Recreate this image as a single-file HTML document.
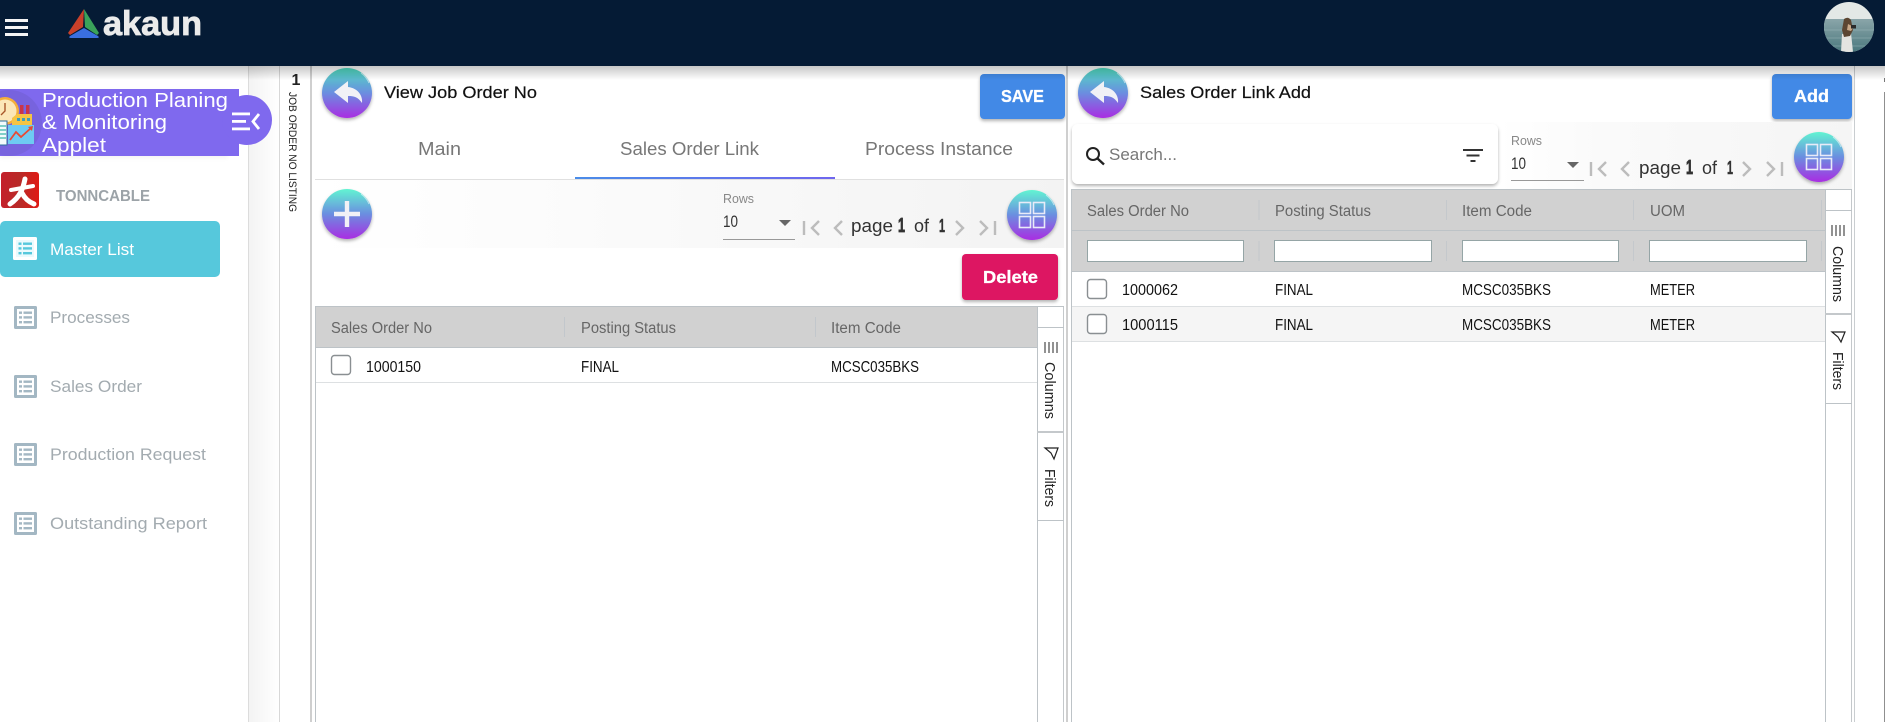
<!DOCTYPE html>
<html lang="en">
<head>
<meta charset="utf-8">
<title>Akaun</title>
<style>
html,body{margin:0;padding:0;background:#fff;width:1885px;height:722px;overflow:hidden}
svg{display:block}
text{font-family:"Liberation Sans",sans-serif}
.nav{font-size:17px;fill:#a3abb0}
.th{font-size:15.5px;fill:#666}
.td{font-size:16px;fill:#111}
.tab{font-size:18px;fill:#777}
.title{font-size:17px;fill:#111;stroke:#111;stroke-width:.2}
.btn{font-size:17.5px;font-weight:bold;fill:#fff;stroke:#fff;stroke-width:.3}
.rows{font-size:13px;fill:#888}
.num{font-size:17px;fill:#333}
.pg{font-size:18px;fill:#333}
.pgb{font-size:20px;font-weight:bold;fill:#333;stroke:#333;stroke-width:.8}
.pgc{font-size:18px;font-weight:bold;fill:#333;stroke:#333;stroke-width:.5}
.side{font-size:14.500px;fill:#222}
.ic{fill:none;stroke:#bcbcbc;stroke-width:2.4}
.cb{fill:#fff;stroke:#8a8f92;stroke-width:1.4}
.inp{fill:#fff;stroke:#95a5a6;stroke-width:1}
</style>
</head>
<body>
<svg xmlns="http://www.w3.org/2000/svg" width="1885" height="722" viewBox="0 0 1885 722">
<defs>
<linearGradient id="g1" x1="0" y1="0" x2="0" y2="1"><stop offset="0" stop-color="#4fdcc0"/><stop offset=".5" stop-color="#6b8ee0"/><stop offset="1" stop-color="#a92de2"/></linearGradient>
<linearGradient id="g2" x1="0" y1="0" x2="0" y2="1"><stop offset="0" stop-color="#62f4d2"/><stop offset=".5" stop-color="#6b8ee0"/><stop offset="1" stop-color="#a92de2"/></linearGradient>
<linearGradient id="tb" x1="0" y1="0" x2="1" y2="0"><stop offset="0" stop-color="#fff"/><stop offset=".35" stop-color="#fbfbfb"/><stop offset="1" stop-color="#f3f3f3"/></linearGradient>
<linearGradient id="tb2" x1="0" y1="0" x2="1" y2="0"><stop offset="0" stop-color="#fff"/><stop offset=".3" stop-color="#fafafa"/><stop offset="1" stop-color="#f5f5f5"/></linearGradient>
<linearGradient id="ul" x1="0" y1="0" x2="1" y2="0"><stop offset="0" stop-color="#4a8ce8"/><stop offset="1" stop-color="#6f66ee"/></linearGradient>
<linearGradient id="sh" x1="0" y1="0" x2="0" y2="1"><stop offset="0" stop-color="#000" stop-opacity=".22"/><stop offset="1" stop-color="#000" stop-opacity="0"/></linearGradient>
<linearGradient id="sd" x1="0" y1="0" x2="1" y2="0"><stop offset="0" stop-color="#f3f3f3"/><stop offset="1" stop-color="#fff"/></linearGradient>
<linearGradient id="tile" x1="0" y1="0" x2="1" y2="0"><stop offset="0" stop-color="#c4202a"/><stop offset=".5" stop-color="#b82a28"/><stop offset="1" stop-color="#e01a14"/></linearGradient>
<linearGradient id="sea" x1="0" y1="0" x2="0" y2="1"><stop offset="0" stop-color="#8aa5a9"/><stop offset="1" stop-color="#4a787d"/></linearGradient>
<filter id="ds" x="-30%" y="-30%" width="160%" height="170%"><feDropShadow dx="0" dy="2" stdDeviation="1.5" flood-color="#000" flood-opacity=".3"/></filter>
<filter id="ds2" x="-5%" y="-15%" width="110%" height="140%"><feDropShadow dx="0" dy="2" stdDeviation="2.5" flood-color="#000" flood-opacity=".25"/></filter>
<clipPath id="av"><circle cx="1849" cy="27" r="25"/></clipPath>
<clipPath id="pc"><rect x="0" y="89" width="239" height="67"/></clipPath>
<g id="list">
<rect x="0" y="0" width="23" height="23" rx="1.5" fill="currentColor"/>
<rect x="3" y="3" width="17" height="17" fill="#fff"/>
<rect x="5" y="5.500" width="3" height="2.400" fill="currentColor"/><rect x="9.500" y="5.500" width="8.500" height="2.400" fill="currentColor"/>
<rect x="5" y="10.200" width="3" height="2.400" fill="currentColor"/><rect x="9.500" y="10.200" width="8.500" height="2.400" fill="currentColor"/>
<rect x="5" y="15" width="3" height="2.400" fill="currentColor"/><rect x="9.500" y="15" width="8.500" height="2.400" fill="currentColor"/>
</g>
<g id="back">
<path d="M-13 -1 L1 -12 V-6 C11 -5 16 3 15 10 C11 4 7 3 1 3 V10 Z" fill="#f1f1f6"/>
<path d="M14 -20 A24 24 0 0 1 22 -10" fill="none" stroke="#fff" stroke-opacity=".55" stroke-width="1"/>
</g>
<g id="grid">
<rect x="-12.500" y="-12.500" width="11" height="11" fill="none" stroke="#e8ebf8" stroke-width="1.600"/>
<rect x="1.500" y="-12.500" width="11" height="11" fill="none" stroke="#e8ebf8" stroke-width="1.600"/>
<rect x="-12.500" y="1.500" width="11" height="11" fill="none" stroke="#e8ebf8" stroke-width="1.600"/>
<rect x="1.500" y="1.500" width="11" height="11" fill="none" stroke="#e8ebf8" stroke-width="1.600"/>
<path d="M14 -20 A24 24 0 0 1 22 -10" fill="none" stroke="#fff" stroke-opacity=".55" stroke-width="1"/>
</g>
<g id="pager">
<path class="ic" d="M1 0V14M16 0L9 7L16 14"/>
<path class="ic" d="M39 0L32 7L39 14"/>
<path class="ic" d="M153 0L160 7L153 14"/>
<path class="ic" d="M177 0L184 7L177 14M192 0V14"/>
</g>
</defs>

<!-- sidebar -->
<rect x="249" y="66" width="30" height="656" fill="url(#sd)"/>
<rect x="248" y="66" width="1" height="656" fill="#dcdcdc"/>
<rect x="279" y="66" width="1" height="656" fill="#d8d8d8"/>
<rect x="310" y="66" width="2" height="656" fill="#cfcfcf"/>

<!-- applet banner -->
<rect x="0" y="89" width="228" height="67" fill="#000" opacity=".2" filter="url(#ds2)"/>
<rect x="0" y="89" width="239" height="67" fill="#7f69ee"/>
<circle cx="247" cy="120" r="25" fill="#7f69ee"/>
<g clip-path="url(#pc)">
<circle cx="9" cy="123" r="33" fill="#7763de"/>
<circle cx="5" cy="111" r="14" fill="#f4ad3c"/><circle cx="5" cy="111" r="11.500" fill="#fbe6b8"/>
<path d="M5 103V111L1 115" stroke="#a8562a" stroke-width="1.400" fill="none"/>
<rect x="20" y="105" width="3.500" height="12" fill="#c9354a"/><rect x="26" y="105" width="3.500" height="12" fill="#c9354a"/>
<path d="M12 125V118L17 114H32V125Z" fill="#f6c443"/>
<rect x="17" y="118" width="3" height="3" fill="#3f9fb8"/><rect x="22" y="118" width="3" height="3" fill="#3f9fb8"/><rect x="27" y="118" width="3" height="3" fill="#3f9fb8"/>
<rect x="8" y="125" width="26" height="19" fill="#6ecbf2"/>
<path d="M10 140L16 132L21 137L31 128" stroke="#e84a33" stroke-width="1.800" fill="none"/>
<path d="M28 127L33 126L32 131Z" fill="#e84a33"/>
<rect x="-3" y="121" width="10" height="24" fill="#f4fbfc" stroke="#2e6f9e" stroke-width="1"/>
<path d="M0 126H6M0 130H6M0 134H6M0 138H6" stroke="#3bb7a8" stroke-width="1.300"/>
</g>
<g fill="#fff">
<text x="42" y="107" font-size="20.500" textLength="186" lengthAdjust="spacingAndGlyphs">Production Planing</text>
<text x="42" y="129" font-size="20.500" textLength="125" lengthAdjust="spacingAndGlyphs">&amp; Monitoring</text>
<text x="42" y="152" font-size="20.500" textLength="64" lengthAdjust="spacingAndGlyphs">Applet</text>
</g>
<rect x="232" y="112.500" width="18" height="2.800" fill="#fff"/><rect x="232" y="120" width="14" height="2.800" fill="#fff"/><rect x="232" y="127.500" width="18" height="2.800" fill="#fff"/>
<path d="M259 114L253 121.500L259 129" fill="none" stroke="#fff" stroke-width="2.800"/>

<!-- tenant -->
<rect x="1" y="172" width="38" height="36" rx="3" fill="url(#tile)"/>
<g fill="none" stroke="#fff" stroke-linecap="round">
<path d="M25 179C23 189 20 197 10 204" stroke-width="5"/>
<path d="M11 190L33 186" stroke-width="4"/>
<path d="M22 193C25 199 29 202 34 204" stroke-width="5"/>
</g>
<text x="56" y="201" font-size="16" font-weight="bold" fill="#9ca3a8" textLength="94" lengthAdjust="spacingAndGlyphs">TONNCABLE</text>

<!-- nav -->
<rect x="0" y="221" width="220" height="56" rx="5" fill="#56c8dc"/>
<rect x="13" y="237" width="24" height="23" rx="1.500" fill="#fff"/>
<rect x="16" y="240" width="18" height="17" fill="#eafafd"/>
<rect x="18.500" y="242.500" width="3" height="2.400" fill="#56c8dc"/><rect x="23" y="242.500" width="9" height="2.400" fill="#56c8dc"/>
<rect x="18.500" y="247.200" width="3" height="2.400" fill="#56c8dc"/><rect x="23" y="247.200" width="9" height="2.400" fill="#56c8dc"/>
<rect x="18.500" y="252" width="3" height="2.400" fill="#56c8dc"/><rect x="23" y="252" width="9" height="2.400" fill="#56c8dc"/>
<text x="50" y="255" font-size="17" fill="#fff" textLength="84" lengthAdjust="spacingAndGlyphs">Master List</text>
<use href="#list" x="14" y="306" color="#a3b7c3"/>
<text class="nav" x="50" y="323" textLength="80" lengthAdjust="spacingAndGlyphs">Processes</text>
<use href="#list" x="14" y="375" color="#a3b7c3"/>
<text class="nav" x="50" y="392" textLength="92" lengthAdjust="spacingAndGlyphs">Sales Order</text>
<use href="#list" x="14" y="443" color="#a3b7c3"/>
<text class="nav" x="50" y="460" textLength="156" lengthAdjust="spacingAndGlyphs">Production Request</text>
<use href="#list" x="14" y="512" color="#a3b7c3"/>
<text class="nav" x="50" y="529" textLength="157" lengthAdjust="spacingAndGlyphs">Outstanding Report</text>

<!-- collapsed list column -->
<text x="291.500" y="85" font-size="16" font-weight="bold" fill="#222">1</text>
<text transform="translate(289 92) rotate(90)" font-size="11" fill="#222" textLength="120" lengthAdjust="spacingAndGlyphs">JOB ORDER NO LISTING</text>

<!-- left panel -->
<circle cx="347" cy="93" r="25" fill="url(#g1)" filter="url(#ds)"/>
<use href="#back" x="347" y="93"/>
<text class="title" x="384" y="98" textLength="153" lengthAdjust="spacingAndGlyphs">View Job Order No</text>
<rect x="980" y="74" width="85" height="45" rx="4" fill="#4289e6" filter="url(#ds)"/>
<text class="btn" x="1001" y="102" textLength="43" lengthAdjust="spacingAndGlyphs">SAVE</text>

<text class="tab" x="418" y="155" textLength="43" lengthAdjust="spacingAndGlyphs">Main</text>
<text class="tab" x="620" y="155" textLength="139" lengthAdjust="spacingAndGlyphs">Sales Order Link</text>
<text class="tab" x="865" y="155" textLength="148" lengthAdjust="spacingAndGlyphs">Process Instance</text>
<rect x="315" y="179" width="749" height="1" fill="#e0e0e0"/>
<rect x="575" y="177" width="260" height="2" fill="url(#ul)"/>

<rect x="315" y="180" width="749" height="68" fill="url(#tb)"/>
<circle cx="347" cy="214" r="25" fill="url(#g2)" filter="url(#ds)"/>
<path d="M347 201V227M334 214H360" stroke="#f1f1f6" stroke-width="4.400"/>
<path d="M361 194 A24 24 0 0 1 369 204" fill="none" stroke="#fff" stroke-opacity=".55" stroke-width="1"/>
<text class="rows" x="723" y="203" textLength="31" lengthAdjust="spacingAndGlyphs">Rows</text>
<text class="num" x="723" y="227" textLength="15" lengthAdjust="spacingAndGlyphs">10</text>
<path d="M779 220H791L785 226Z" fill="#666"/>
<rect x="723" y="239" width="72" height="1" fill="#999"/>
<use href="#pager" x="803" y="221"/>
<text class="pg" x="851" y="232" textLength="42" lengthAdjust="spacingAndGlyphs">page</text>
<text class="pgb" x="898" y="232" textLength="7" lengthAdjust="spacingAndGlyphs">1</text>
<text class="pg" x="914" y="232" textLength="15" lengthAdjust="spacingAndGlyphs">of</text>
<text class="pgc" x="939" y="232" textLength="6" lengthAdjust="spacingAndGlyphs">1</text>
<circle cx="1032" cy="215" r="25" fill="url(#g2)" filter="url(#ds)"/>
<use href="#grid" x="1032" y="215"/>

<rect x="962" y="254" width="96" height="46" rx="4" fill="#dd1562" filter="url(#ds)"/>
<text class="btn" x="983" y="283" textLength="55" lengthAdjust="spacingAndGlyphs">Delete</text>

<rect x="315" y="306" width="722" height="42" fill="#d1d1d1"/>
<rect x="315" y="347" width="722" height="1" fill="#bdc3c7"/>
<rect x="315" y="306" width="1" height="416" fill="#bdc3c7"/>
<rect x="564" y="317" width="1" height="20" fill="#c2c7cc"/>
<rect x="815" y="317" width="1" height="20" fill="#c2c7cc"/>
<text class="th" x="331" y="333" textLength="101" lengthAdjust="spacingAndGlyphs">Sales Order No</text>
<text class="th" x="581" y="333" textLength="95" lengthAdjust="spacingAndGlyphs">Posting Status</text>
<text class="th" x="831" y="333" textLength="70" lengthAdjust="spacingAndGlyphs">Item Code</text>
<rect class="cb" x="331.500" y="355.500" width="19" height="19" rx="3"/>
<text class="td" x="366" y="372" textLength="55" lengthAdjust="spacingAndGlyphs">1000150</text>
<text class="td" x="581" y="372" textLength="38" lengthAdjust="spacingAndGlyphs">FINAL</text>
<text class="td" x="831" y="372" textLength="88" lengthAdjust="spacingAndGlyphs">MCSC035BKS</text>
<rect x="316" y="382" width="721" height="1" fill="#dde0e2"/>

<rect x="1038" y="307" width="25" height="415" fill="#fff"/>
<rect x="1037" y="306" width="1" height="416" fill="#bdc3c7"/>
<rect x="1063" y="306" width="1" height="416" fill="#c4c8cb"/>
<rect x="315" y="306" width="749" height="1" fill="#bdc3c7"/>
<rect x="1037" y="327" width="27" height="1" fill="#bdc3c7"/>
<rect x="1037" y="431" width="27" height="2" fill="#c4c8cb"/>
<rect x="1037" y="520" width="27" height="1" fill="#bdc3c7"/>
<path d="M1045 342V353M1049 342V353M1053 342V353M1057 342V353" stroke="#3a3a3a" stroke-width="1.100"/>
<text class="side" transform="translate(1045 362) rotate(90)" textLength="57" lengthAdjust="spacingAndGlyphs">Columns</text>
<path d="M1045 448H1058L1054 459L1051 453Z" fill="none" stroke="#222" stroke-width="1.200"/>
<text class="side" transform="translate(1045 469) rotate(90)" textLength="38" lengthAdjust="spacingAndGlyphs">Filters</text>

<rect x="1066" y="66" width="2" height="656" fill="#cfcfcf"/>

<!-- right panel -->
<circle cx="1103" cy="93" r="25" fill="url(#g1)" filter="url(#ds)"/>
<use href="#back" x="1103" y="93"/>
<text class="title" x="1140" y="98" textLength="171" lengthAdjust="spacingAndGlyphs">Sales Order Link Add</text>
<rect x="1772" y="74" width="80" height="45" rx="4" fill="#4289e6" filter="url(#ds)"/>
<text class="btn" x="1794" y="102" textLength="35" lengthAdjust="spacingAndGlyphs">Add</text>

<rect x="1498" y="122" width="354" height="67" fill="url(#tb2)"/>
<rect x="1072" y="124" width="426" height="60" rx="6" fill="#fff" filter="url(#ds)"/>
<circle cx="1093" cy="154" r="6" fill="none" stroke="#222" stroke-width="2"/>
<path d="M1097.500 158.500L1104 164.500" stroke="#222" stroke-width="2.400"/>
<text x="1109" y="160" font-size="17" fill="#777" textLength="68" lengthAdjust="spacingAndGlyphs">Search...</text>
<path d="M1463 150H1483M1466.500 155.500H1479.500M1470.500 161H1475.500" stroke="#333" stroke-width="2"/>

<text class="rows" x="1511" y="145" textLength="31" lengthAdjust="spacingAndGlyphs">Rows</text>
<text class="num" x="1511" y="169" textLength="15" lengthAdjust="spacingAndGlyphs">10</text>
<path d="M1567 162H1579L1573 168Z" fill="#666"/>
<rect x="1511" y="180" width="73" height="1" fill="#999"/>
<use href="#pager" x="1590" y="162"/>
<text class="pg" x="1639" y="174" textLength="42" lengthAdjust="spacingAndGlyphs">page</text>
<text class="pgb" x="1686" y="174" textLength="7" lengthAdjust="spacingAndGlyphs">1</text>
<text class="pg" x="1702" y="174" textLength="15" lengthAdjust="spacingAndGlyphs">of</text>
<text class="pgc" x="1727" y="174" textLength="6" lengthAdjust="spacingAndGlyphs">1</text>
<circle cx="1819" cy="157" r="25" fill="url(#g2)" filter="url(#ds)"/>
<use href="#grid" x="1819" y="157"/>

<rect x="1072" y="189" width="754" height="83" fill="#d1d1d1"/>
<rect x="1072" y="230" width="754" height="1" fill="#bdc3c7"/>
<rect x="1072" y="271" width="754" height="1" fill="#bdc3c7"/>
<rect x="1071" y="189" width="1" height="533" fill="#bdc3c7"/>
<path d="M1259 200V220M1446.500 200V220M1633.500 200V220M1821.500 200V220M1259 241V261M1446.500 241V261M1633.500 241V261M1821.500 241V261" stroke="#c4c8cc" stroke-width="1"/>
<text class="th" x="1087" y="216" textLength="102" lengthAdjust="spacingAndGlyphs">Sales Order No</text>
<text class="th" x="1275" y="216" textLength="96" lengthAdjust="spacingAndGlyphs">Posting Status</text>
<text class="th" x="1462" y="216" textLength="70" lengthAdjust="spacingAndGlyphs">Item Code</text>
<text class="th" x="1650" y="216" textLength="35" lengthAdjust="spacingAndGlyphs">UOM</text>
<rect class="inp" x="1087.500" y="240.500" width="156" height="21"/>
<rect class="inp" x="1274.500" y="240.500" width="157" height="21"/>
<rect class="inp" x="1462.500" y="240.500" width="156" height="21"/>
<rect class="inp" x="1649.500" y="240.500" width="157" height="21"/>

<rect x="1072" y="307" width="754" height="34" fill="#f5f5f5"/>
<rect x="1072" y="306" width="754" height="1" fill="#dde0e2"/>
<rect x="1072" y="341" width="754" height="1" fill="#dde0e2"/>
<rect class="cb" x="1087.500" y="279.500" width="19" height="19" rx="3"/>
<rect class="cb" x="1087.500" y="314.500" width="19" height="19" rx="3"/>
<text class="td" x="1122" y="295" textLength="56" lengthAdjust="spacingAndGlyphs">1000062</text>
<text class="td" x="1275" y="295" textLength="38" lengthAdjust="spacingAndGlyphs">FINAL</text>
<text class="td" x="1462" y="295" textLength="89" lengthAdjust="spacingAndGlyphs">MCSC035BKS</text>
<text class="td" x="1650" y="295" textLength="45" lengthAdjust="spacingAndGlyphs">METER</text>
<text class="td" x="1122" y="330" textLength="56" lengthAdjust="spacingAndGlyphs">1000115</text>
<text class="td" x="1275" y="330" textLength="38" lengthAdjust="spacingAndGlyphs">FINAL</text>
<text class="td" x="1462" y="330" textLength="89" lengthAdjust="spacingAndGlyphs">MCSC035BKS</text>
<text class="td" x="1650" y="330" textLength="45" lengthAdjust="spacingAndGlyphs">METER</text>

<rect x="1826" y="190" width="25" height="532" fill="#fff"/>
<rect x="1825" y="189" width="1" height="533" fill="#bdc3c7"/>
<rect x="1851" y="189" width="1" height="533" fill="#c4c8cb"/>
<rect x="1071" y="189" width="781" height="1" fill="#bdc3c7"/>
<rect x="1825" y="210" width="27" height="1" fill="#bdc3c7"/>
<rect x="1825" y="313" width="27" height="2" fill="#c4c8cb"/>
<rect x="1825" y="403" width="27" height="1" fill="#bdc3c7"/>
<path d="M1832 225V236M1836 225V236M1840 225V236M1844 225V236" stroke="#3a3a3a" stroke-width="1.100"/>
<text class="side" transform="translate(1833 246) rotate(90)" textLength="56" lengthAdjust="spacingAndGlyphs">Columns</text>
<path d="M1832 332H1845L1841 342L1838 337Z" fill="none" stroke="#222" stroke-width="1.200"/>
<text class="side" transform="translate(1833 352) rotate(90)" textLength="38" lengthAdjust="spacingAndGlyphs">Filters</text>

<rect x="1854" y="66" width="1" height="656" fill="#c9cdd0"/>
<rect x="1884" y="92" width="1" height="630" fill="#8f8f8f"/>
<rect x="1884" y="78" width="1" height="4" fill="#777"/>

<!-- top bar -->
<rect x="0" y="66" width="1885" height="14" fill="url(#sh)"/>
<rect x="0" y="0" width="1885" height="66" fill="#051b35"/>
<rect x="5" y="19" width="23" height="3" fill="#f4f4f4"/><rect x="5" y="26" width="23" height="3" fill="#f4f4f4"/><rect x="5" y="33" width="23" height="3" fill="#f4f4f4"/>
<path d="M84 9L68 33L70 35L83 27Z" fill="#c8402a"/>
<path d="M84 9L99 33L97 35L85 27Z" fill="#3aa35a"/>
<path d="M84 28L70 36Q68 38 71 38H97Q100 38 98 36Z" fill="#3a6fe0"/>
<text x="103" y="35" font-size="34" font-weight="bold" fill="#ebebeb" stroke="#ebebeb" stroke-width=".8" textLength="99" lengthAdjust="spacingAndGlyphs">akaun</text>

<g clip-path="url(#av)">
<rect x="1824" y="2" width="50" height="50" fill="#e3e8e6"/>
<rect x="1824" y="19" width="50" height="33" fill="url(#sea)"/>
<path d="M1824 30H1874M1824 38H1874M1824 46H1874" stroke="#a8c0c2" stroke-width="1" opacity=".4"/>
<path d="M1842 34L1851 33L1853 52H1841Z" fill="#e4e4e0"/>
<path d="M1844 19Q1848 16 1851 20L1853 30L1850 36L1844 37L1842 30Z" fill="#5c4632"/>
<path d="M1848 24L1854 27L1851 31L1847 30Z" fill="#c8a888"/>
<rect x="1851" y="25" width="5" height="3.500" fill="#2a2a2a"/>
</g>
</svg>
</body>
</html>
